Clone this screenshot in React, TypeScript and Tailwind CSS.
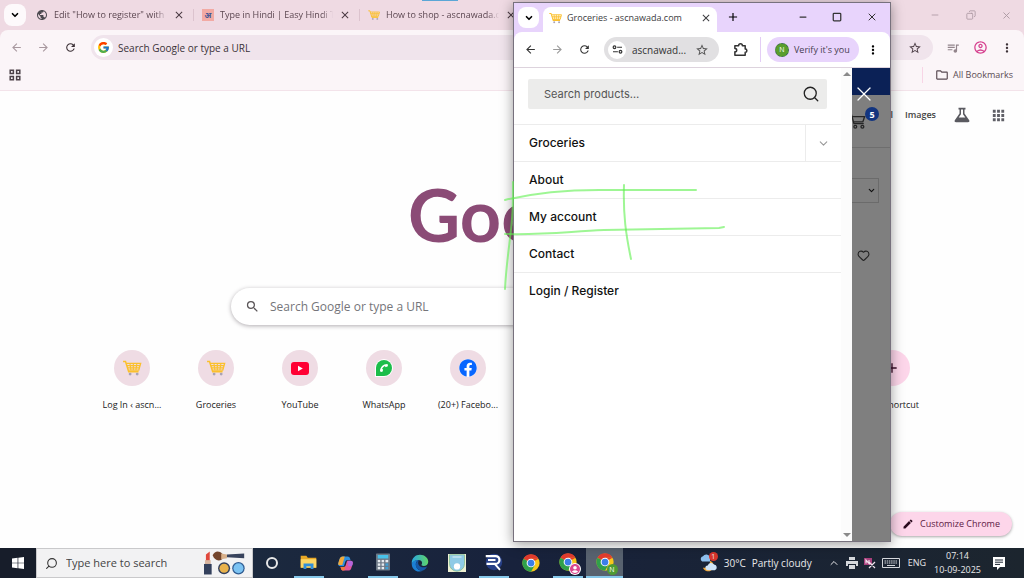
import React, { type ReactElement, type ReactNode } from 'react'
import clsx from 'clsx'
import { FaFacebook, FaPhoneAlt } from 'react-icons/fa'
import { FcGoogle } from 'react-icons/fc'
import {
    MdAccountCircle,
    MdApps,
    MdArrowBack,
    MdArrowForward,
    MdClose,
    MdEdit,
    MdMoreVert,
    MdOutlineAccountCircle,
    MdOutlineFolder,
    MdPublic,
    MdQueueMusic,
    MdRefresh,
    MdSearch,
    MdStarBorder,
    MdAdd,
} from 'react-icons/md'
import { ChevronDown, ChevronUp, Copy, Heart, Minus, Search, Square, X } from 'lucide-react'

interface IconProps {
    className?: string
}

function CartLogo({ className }: IconProps): ReactElement {
    return (
        <svg viewBox="0 0 20 17" className={className} fill="none" stroke="#fbc02d">
            <path d="M0.5 1.5h2.6l3.4 11h10.5" strokeWidth="1.6" />
            <path d="M3.8 3.5h15.4l-2 7.3H6" strokeWidth="1.4" />
            <path d="M4.6 6h14M5.3 8.4h12.6M7.8 3.5l1 7.3M11.4 3.5v7.3M15.2 3.5l-1 7.3" strokeWidth="1.2" />
            <circle cx="8" cy="15" r="1.5" fill="#a9a3b5" stroke="none" />
            <circle cx="15.5" cy="15" r="1.5" fill="#a9a3b5" stroke="none" />
        </svg>
    )
}

function HindiLogo({ className }: IconProps): ReactElement {
    return (
        <span className={clsx('flex items-center justify-center overflow-hidden bg-[#f2aaa4] text-[#3f5594] text-[8px] leading-none font-bold', className)}>
            अ
        </span>
    )
}

function ChromeLogo({ className }: IconProps): ReactElement {
    return (
        <svg viewBox="0 0 24 24" className={className}>
            <circle cx="12" cy="12" r="11.5" fill="#f8c81c" />
            <path d="M12 12 2.04 6.25A11.5 11.5 0 0 1 21.96 6.25H12Z" fill="#e23b2e" />
            <path d="M12 12 2.04 6.25A11.5 11.5 0 0 0 12 23.5l5-8.6Z" fill="#30a04b" />
            <path d="M12 6.25h9.96L12 12Z" fill="#e23b2e" />
            <circle cx="12" cy="12" r="5.8" fill="#fff" />
            <circle cx="12" cy="12" r="4.5" fill="#3b7fe8" />
        </svg>
    )
}

function EdgeLogo({ className }: IconProps): ReactElement {
    return (
        <svg viewBox="0 0 24 24" className={className}>
            <defs>
                <linearGradient id="edgeTop" x1="0" x2="1">
                    <stop offset="0" stopColor="#2aa5e0" />
                    <stop offset="1" stopColor="#5fd668" />
                </linearGradient>
            </defs>
            <path d="M1 13C.5 5.5 6 1 12 1c6.5 0 11 4.500 11 9.300 0 3.700-3 5.700-6 5.700-2 0-3.300-.8-3-1.600 1.800-2.200.6-6.400-4-6.400-4 0-7 2-9 5Z" fill="url(#edgeTop)" />
            <path d="M1 13c2-4 5.500-5.300 9-5-2.600 1.200-4 4-3.500 7 .6 4.300 4.500 8 10 7-8 4-15.500-1-15.500-9Z" fill="#1b7fd4" />
            <path d="M6.500 15C6 11.500 8 8.500 11 8.200c-1.800 1.800-2 4-.6 6.300 2 3.500 7 4 11 2-1.500 3.500-4 5-6.500 5.300-4 .4-8-2.300-8.400-6.800Z" fill="#1558a8" />
        </svg>
    )
}

function CopilotLogo({ className }: IconProps): ReactElement {
    return (
        <svg viewBox="0 0 24 24" className={className}>
            <path d="M8 2h7c2 0 2.800 1 3.400 3l.6 2h-4c-2 0-2.800 1-3.400 3l-1.800 6H5c-3 0-4-2-3-5l2-6c.7-2 2-3 4-3Z" fill="#2d8fe0" />
            <path d="M2 11l1.500-5C4.200 3.500 6 2 8 2h3L7.500 14H3c-1.500 0-1.500-1.500-1-3Z" fill="#f0a93a" />
            <path d="M16 22H9c-2 0-2.800-1-3.400-3L5 17h4c2 0 2.800-1 3.400-3l1.800-6H19c3 0 4 2 3 5l-2 6c-.7 2-2 3-4 3Z" fill="#e0559a" />
            <path d="M5 17h4c2 0 2.800-1 3.400-3l-2 8H9c-2 0-2.800-1-3.400-3Z" fill="#f0783a" />
            <path d="M15 8h4c3 0 4 2 3 5l-1 3h-5Z" fill="#b566dc" />
        </svg>
    )
}

function ExplorerLogo({ className }: IconProps): ReactElement {
    return (
        <svg viewBox="0 0 24 22" className={className}>
            <path d="M1 2h8l2 3h12v14H1Z" fill="#e9a825" />
            <path d="M1 7h22v12H1Z" fill="#fbd666" />
            <path d="M5 13h14v8h-4v-4H9v4H5Z" fill="#2f8fdb" />
        </svg>
    )
}

function CalculatorLogo({ className }: IconProps): ReactElement {
    return (
        <svg viewBox="0 0 20 24" className={className}>
            <rect width="20" height="24" rx="1" fill="#6c7886" />
            <rect x="2.500" y="2" width="15" height="5" fill="#49c2ea" />
            {[9, 14, 19].map((y) => (
                <g key={y} fill="#e6ebf0">
                    <rect x="2.500" y={y} width="3.600" height="3.400" />
                    <rect x="8" y={y} width="3.600" height="3.400" />
                    <rect x="13.500" y={y} width="4" height="3.400" fill={y === 9 ? '#e6ebf0' : '#3f9fd4'} />
                </g>
            ))}
        </svg>
    )
}

function PhotoLogo({ className }: IconProps): ReactElement {
    return (
        <svg viewBox="0 0 24 24" className={className}>
            <rect width="24" height="24" fill="#eef0d2" />
            <path d="M2 1h20v12a10 10 0 0 1-20 0Z" fill="#8fcbe6" stroke="#7fb98b" />
            <circle cx="12" cy="16.500" r="4.200" fill="#fff" />
            <path d="M6 4h12" stroke="#d8eef6" strokeWidth="1.500" />
        </svg>
    )
}

function RecorderLogo({ className }: IconProps): ReactElement {
    return (
        <svg viewBox="0 0 24 24" className={className}>
            <circle cx="12" cy="12" r="11" fill="#263f86" />
            <path d="M1 4h13a5 5 0 0 1 0 10.500H2" fill="none" stroke="#fff" strokeWidth="3" />
            <path d="M4 9.300h10M13 14.500l7 8" fill="none" stroke="#fff" strokeWidth="2.600" />
        </svg>
    )
}

function MakeupArt({ className }: IconProps): ReactElement {
    return (
        <svg viewBox="0 0 46 26" className={className}>
            <path d="M2 4l4-3v10H2Z" fill="#e0483c" />
            <path d="M1 10h6v5H1Z" fill="#d9b6a0" />
            <path d="M0 14h8v11H0Z" fill="#33405c" />
            <path d="M9 5c2-5 7-5 10-2v6c-4 3-8 1-10-4Z" fill="#73452c" />
            <path d="M18 3l6 1v4l-6 1Z" fill="#d8b08a" />
            <path d="M24 4l18-1v5l-18-1Z" fill="#38435c" />
            <circle cx="21" cy="18.500" r="6.300" fill="#33405c" />
            <circle cx="21" cy="18.500" r="4.800" fill="#e8b24c" />
            <circle cx="36" cy="18.500" r="6.500" fill="#2f5c92" />
            <circle cx="36" cy="18.500" r="5.200" fill="#7cc3f2" />
        </svg>
    )
}

function WeatherArt({ className }: IconProps): ReactElement {
    return (
        <svg viewBox="0 0 24 22" className={className}>
            <path d="M14 8a7 7 0 1 1-9 9c5 1 9-3 9-9Z" fill="#f2a93b" />
            <path d="M4 9a3.500 3.500 0 0 1 1-6.500A5 5 0 0 1 14 4v5Z" fill="#8fc0ee" />
            <path d="M11 20a3 3 0 0 1 0-6 4.500 4.500 0 0 1 8-1 3.600 3.600 0 0 1 1 7Z" fill="#cfe4f8" />
        </svg>
    )
}

function Tune({ className }: IconProps): ReactElement {
    return (
        <svg viewBox="0 0 14 12" className={className} fill="none" stroke="#333" strokeWidth="1.600">
            <circle cx="3" cy="3" r="1.800" />
            <path d="M6.500 3H13M1 9h6.500" />
            <circle cx="11" cy="9" r="1.800" />
        </svg>
    )
}

function Flask({ className }: IconProps): ReactElement {
    return (
        <svg viewBox="0 0 16 16" className={className} fill="#5a5a60">
            <path d="M4.500.8h7v1.600h-1v4.200l4.700 6.600c.6 1-.1 2-1.200 2H2c-1.100 0-1.800-1-1.200-2l4.700-6.600V2.400h-1ZM7 2.400v4.800L4.700 10.400h6.600L9 7.200V2.400Z" fillRule="evenodd" />
        </svg>
    )
}

// jigsaw outline with a knob on the top and on the right, notch on the left
function Puzzle({ className }: IconProps): ReactElement {
    return (
        <svg viewBox="0 0 16 16" className={className} fill="none" stroke="#333" strokeWidth="1.600" strokeLinejoin="round">
            <path d="M2 4h4c0-3 4-3 4 0h3v3.500c2.400 0 2.400 3.500 0 3.500v3H2v-3.500c2.600 0 2.600-3.500 0-3.500Z" />
        </svg>
    )
}

function ShopCart({ className }: IconProps): ReactElement {
    return (
        <svg viewBox="0 0 20 18" className={className} fill="none" stroke="#262626" strokeWidth="1.500">
            <path d="M0 1h3l3 11h11" />
            <path d="M4 4h14l-2 6H6" />
            <circle cx="7.500" cy="15.500" r="1.600" />
            <circle cx="15.500" cy="15.500" r="1.600" />
        </svg>
    )
}

interface TabProps {
    icon: ReactNode
    title: string
}

function Tab({ icon, title }: TabProps): ReactElement {
    return (
        <div className="flex w-[166px] shrink-0 items-center border-r border-[#dcc3ce] h-3 pl-2">
            {icon}
            <span className="ml-1.5 w-[113px] overflow-hidden whitespace-nowrap leading-4 mask-r-from-90% text-[#5c4751]">{title}</span>
            <button aria-label="Close tab" className="ml-1.5"><MdClose className="size-3 text-[#4a3a42]" /></button>
        </div>
    )
}

interface ShortcutProps {
    label: string
    children: ReactNode
    pink?: boolean
}

function Shortcut({ label, children, pink }: ShortcutProps): ReactElement {
    return (
        <a href="#" className="flex w-[84px] flex-col items-center gap-[11px] text-[#222]">
            <span className={clsx('flex size-9 items-center justify-center rounded-full', pink ? 'bg-[#fdd6ea]' : 'bg-[#efdce4]')}>
                {children}
            </span>
            <span className="whitespace-nowrap leading-4">{label}</span>
        </a>
    )
}

function BackWindow(): ReactElement {
    return (
        <div className="flex flex-1 flex-col bg-[#efdae3]">
            <div className="flex h-[30px] items-center">
                <button aria-label="Search tabs" className="ml-1 flex size-[22px] items-center justify-center rounded-lg bg-[#fdf9fb]">
                    <ChevronDown className="size-[10px]" strokeWidth={4} />
                </button>
                <div className="ml-0.5 flex flex-1 items-center overflow-hidden">
                    <Tab icon={<MdPublic className="size-3 text-[#4c4a50]" />} title={'Edit "How to register" with E'} />
                    <Tab icon={<HindiLogo className="size-3" />} title="Type in Hindi | Easy Hindi Ty" />
                    <Tab icon={<CartLogo className="h-3 w-3" />} title="How to shop - ascnawada.co" />
                </div>
                <div className="flex w-[94px] items-center justify-between pr-3 text-[#ab98a1]">
                    <button aria-label="Minimize"><Minus className="size-[10px]" /></button>
                    <button aria-label="Restore"><Copy className="size-[10px] -scale-x-100" /></button>
                    <button aria-label="Close"><X className="size-[11px]" /></button>
                </div>
            </div>
            <div className="rounded-t-lg bg-[#fbf5f8] border-b border-[#f3e3ea] h-[61px]">
                <div className="flex h-[35px] items-center">
                    <div className="flex w-[91px] items-center gap-[14px] pl-[10px] text-[#a8989f]">
                        <button aria-label="Back"><MdArrowBack className="size-[13px]" /></button>
                        <button aria-label="Forward"><MdArrowForward className="size-[13px]" /></button>
                        <button aria-label="Reload"><MdRefresh className="size-[13px] text-[#3b3036]" /></button>
                    </div>
                    <div className="flex h-[25px] flex-1 items-center rounded-full bg-[#f0e4ec] px-[3px]">
                        <span className="flex size-[19px] items-center justify-center rounded-full bg-white"><FcGoogle className="size-[13px]" /></span>
                        <input aria-label="Address" placeholder="Search Google or type a URL" className="ml-[5px] flex-1 text-[10px] placeholder:text-[#3b3238] outline-none" />
                        <button aria-label="Bookmark" className="mr-2"><MdStarBorder className="size-[14px] text-[#51434b]" /></button>
                    </div>
                    <div className="flex w-[91px] items-center justify-between pl-[13px] pr-[10px]">
                        <button aria-label="Media"><MdQueueMusic className="size-[14px] text-[#93858c]" /></button>
                        <button aria-label="Profile"><MdOutlineAccountCircle className="size-[15px] text-[#d6408f]" /></button>
                        <button aria-label="Menu"><MdMoreVert className="size-[14px] text-[#3b3036]" /></button>
                    </div>
                </div>
                <div className="flex h-5 items-center justify-between pl-[9px] pr-[11px]">
                    <button aria-label="Apps">
                        <svg viewBox="0 0 12 12" className="size-3" fill="none" stroke="#4c4047" strokeWidth="1.500">
                            <path d="M1.200 1.200h3.200v3.200H1.200zM7.600 1.200h3.200v3.200H7.600zM1.200 7.600h3.200v3.200H1.200zM7.600 7.600h3.200v3.200H7.600z" />
                        </svg>
                    </button>
                    <button className="flex items-center gap-1 border-l border-[#f8d5e6] pl-3 text-[#5a4b53]">
                        <MdOutlineFolder className="size-[14px]" />All Bookmarks
                    </button>
                </div>
            </div>
            <div className="flex flex-1 flex-col bg-[#fefefe]">
                <nav className="flex h-12 items-center justify-end gap-3 pr-[17px] font-semibold text-[#444]">
                    <a href="#">Gmail</a>
                    <a href="#">Images</a>
                    <Flask className="ml-1.5 size-4" />
                    <MdApps className="ml-2 size-[17px] text-[#5f5f66]" />
                </nav>
                <h1 className="mx-auto mt-8 h-[86px] w-[208px] whitespace-nowrap font-['Lato'] text-[72px] leading-[86px] font-bold text-[#8b4b76]">Google</h1>
                <label className="mx-auto mt-[31px] flex h-[37px] w-[562px] items-center rounded-full bg-white pl-[14px] shadow-[0_1px_4px_rgba(60,50,60,0.4)]">
                    <MdSearch className="size-[15px] text-[#5a5558]" />
                    <input placeholder="Search Google or type a URL" className="ml-[10px] flex-1 text-[12px] placeholder:text-[#75757a] outline-none" />
                </label>
                <div className="mx-auto mt-[25px] flex w-[844px] justify-between">
                    <Shortcut label="Log In ‹ ascn..."><CartLogo className="h-4 w-5" /></Shortcut>
                    <Shortcut label="Groceries"><CartLogo className="h-4 w-5" /></Shortcut>
                    <Shortcut label="YouTube">
                        <svg viewBox="0 0 18 13" className="h-[13px] w-[18px]">
                            <rect width="18" height="13" rx="3" fill="#ff0033" />
                            <path d="M7 3.800v5.400l4.800-2.700Z" fill="#fff" />
                        </svg>
                    </Shortcut>
                    <Shortcut label="WhatsApp">
                        <span className="flex size-4 items-center justify-center rounded-full rounded-bl-sm bg-[#1cbd4a] ring-1 ring-white">
                            <FaPhoneAlt className="size-2 rotate-90 text-white" />
                        </span>
                    </Shortcut>
                    <Shortcut label="(20+) Facebo...">
                        <span className="rounded-full bg-white"><FaFacebook className="size-[18px] text-[#0866ff]" /></span>
                    </Shortcut>
                    <div className="flex-1" />
                    <Shortcut label="Add shortcut" pink><MdAdd className="size-4 text-[#3a0f2a]" /></Shortcut>
                </div>
                <div className="mt-auto flex justify-end pb-3 pr-3">
                    <button className="flex h-6 items-center gap-1.5 rounded-full bg-[#fdd6ea] px-3 text-[#5c1a44] shadow-[0_1px_3px_rgba(0,0,0,0.35)]">
                        <MdEdit className="size-3 text-[#2a0a1e]" />Customize Chrome
                    </button>
                </div>
            </div>
        </div>
    )
}

const menu = ['Groceries', 'About', 'My account', 'Contact', 'Login / Register']

function FrontWindow(): ReactElement {
    return (
        <div className="absolute left-[513px] top-[2px] bottom-9 flex w-[378px] flex-col border border-[#77717d] bg-[#e8d4fc] shadow-[0_2px_12px_rgba(0,0,0,0.4)]">
            <div className="flex h-[29px] items-end">
                <button aria-label="Search tabs" className="mb-1 ml-1 flex size-[21px] items-center justify-center rounded-lg bg-white">
                    <ChevronDown className="size-[10px]" strokeWidth={4} />
                </button>
                <div className="ml-1 flex h-[25px] w-[174px] items-center rounded-t-lg bg-white pb-1 pl-1.5 text-[#3c3c40]">
                    <CartLogo className="h-3 w-[13px]" />
                    <span className="ml-[5px] flex-1 whitespace-nowrap">Groceries - ascnawada.com</span>
                    <button aria-label="Close tab" className="mr-[5px]"><MdClose className="size-3" /></button>
                </div>
                <button aria-label="New tab" className="mb-2 ml-[9px]"><MdAdd className="size-[14px]" /></button>
                <div className="mb-[9px] ml-auto flex w-[92px] items-center justify-between pr-3 text-[#333]">
                    <button aria-label="Minimize"><Minus className="size-[10px]" strokeWidth={3} /></button>
                    <button aria-label="Maximize"><Square className="size-[10px]" strokeWidth={3} /></button>
                    <button aria-label="Close"><X className="size-3" /></button>
                </div>
            </div>
            <div className="flex h-9 items-center rounded-t-lg border-b border-[#ddd3dd] bg-white">
                <div className="flex w-[90px] items-center gap-[14px] pl-[10px] text-[#333]">
                    <button aria-label="Back"><MdArrowBack className="size-[13px]" /></button>
                    <button aria-label="Forward"><MdArrowForward className="size-[13px] text-[#9a9a9a]" /></button>
                    <button aria-label="Reload"><MdRefresh className="size-[13px]" /></button>
                </div>
                <div className="flex h-[25px] w-[115px] items-center rounded-full bg-[#e1e0e2] px-1">
                    <span className="flex size-[18px] shrink-0 items-center justify-center rounded-full bg-white"><Tune className="h-[9px] w-[11px]" /></span>
                    <input aria-label="Address" defaultValue="ascnawad..." className="ml-1.5 w-[60px] text-[10px] text-[#333] outline-none" />
                    <button aria-label="Bookmark" className="ml-[3px]"><MdStarBorder className="size-[14px] text-[#555]" /></button>
                </div>
                <button aria-label="Extensions" className="ml-[14px]"><Puzzle className="size-[15px]" /></button>
                <button className="ml-3 border-l border-[#e3cdf5] pl-1.5">
                    <span className="flex h-[25px] items-center gap-[5px] rounded-full bg-[#e8d4fc] pl-2 pr-[9px] text-[#463c50]">
                        <span className="flex size-[14px] items-center justify-center rounded-full border border-dashed border-[#3f6a55] bg-[#5a9e2d] text-[7px] leading-none text-white">N</span>
                        <span className="whitespace-nowrap">Verify it's you</span>
                    </span>
                </button>
                <button aria-label="Menu" className="ml-auto mr-[10px]"><MdMoreVert className="size-[14px]" /></button>
            </div>
            <div className="flex flex-1 bg-white">
                <aside className="flex-1 pt-[11px] font-['Inter'] text-[12px] text-[#111]">
                    <label className="mx-[14px] flex h-[30px] items-center rounded-xs bg-[#ececeb] pl-4 pr-[7px]">
                        <input placeholder="Search products…" className="min-w-0 flex-1 text-[11px] placeholder:text-[#555] outline-none" />
                        <Search className="size-[18px] text-[#222]" strokeWidth={1.75} />
                    </label>
                    <ul className="mt-[15px]">
                        {menu.map((item, index) => (
                            <li key={item} className="flex h-[37px] items-center border-t border-[#ececec]">
                                <a href="#" className="flex-1 pl-[15px] font-medium">{item}</a>
                                {index === 0 && (
                                    <button aria-label="Expand" className="flex h-full w-9 items-center justify-center border-l border-[#ececec]">
                                        <ChevronDown className="size-[13px] text-[#999]" />
                                    </button>
                                )}
                            </li>
                        ))}
                    </ul>
                </aside>
                <div className="flex w-[11px] flex-col items-center justify-between bg-[#fcfcfc] py-1 text-[#8a8a8a]">
                    <svg viewBox="0 0 8 4" className="h-1 w-2" fill="currentColor"><path d="M0 4 4 0l4 4Z" /></svg>
                    <svg viewBox="0 0 8 4" className="h-1 w-2" fill="currentColor"><path d="M0 0l4 4 4-4Z" /></svg>
                </div>
                <div className="relative w-[38px] bg-[#7f7f7f]">
                    <div className="h-[27px] bg-[#0b2156]" />
                    <button aria-label="Close menu" className="absolute left-0 top-[14px]"><X className="size-6 text-white" strokeWidth={1.25} /></button>
                    <div className="flex h-[53px] items-center overflow-hidden border-b border-[#6e6e6e]">
                        <ShopCart className="-ml-1 h-4 w-[19px]" />
                    </div>
                    <span className="absolute left-[13px] top-[39px] flex size-[14px] items-center justify-center rounded-full bg-[#13357f] text-[9px] leading-none font-bold text-white">5</span>
                    <div className="relative mt-[30px] h-[25px] w-[27px]">
                        <select aria-label="Sort order" className="h-full w-full appearance-none border border-l-0 border-[#6b6b6b]" />
                        <ChevronDown className="pointer-events-none absolute right-[3px] top-2 size-[9px] text-[#111]" strokeWidth={3} />
                    </div>
                    <button aria-label="Add to wishlist" className="ml-[5px] mt-[46px]"><Heart className="size-[13px] text-[#222]" /></button>
                </div>
            </div>
        </div>
    )
}

interface TaskItem {
    name: string
    icon: ReactNode
    open?: boolean
    active?: boolean
}

const tasks: TaskItem[] = [
    { name: 'Cortana', icon: <span className="size-3 rounded-full border-2 border-[#e8e8e8]" /> },
    { name: 'File Explorer', icon: <ExplorerLogo className="h-4 w-[17px]" />, open: true },
    { name: 'Copilot', icon: <CopilotLogo className="size-[17px]" /> },
    { name: 'Calculator', icon: <CalculatorLogo className="h-[18px] w-[14px]" />, open: true },
    { name: 'Edge', icon: <EdgeLogo className="size-[18px]" /> },
    { name: 'Photos', icon: <PhotoLogo className="size-[18px]" /> },
    { name: 'Recorder', icon: <RecorderLogo className="size-[18px]" />, open: true },
    { name: 'Chrome', icon: <ChromeLogo className="size-[18px]" /> },
    {
        name: 'Chrome profile',
        icon: (
            <span className="relative">
                <ChromeLogo className="size-[18px]" />
                <MdAccountCircle className="absolute -bottom-1 -right-1 size-3 rounded-full bg-white text-[#d9488f]" />
            </span>
        ),
        open: true,
    },
    {
        name: 'Chrome groceries',
        icon: (
            <span className="relative">
                <ChromeLogo className="size-[18px]" />
                <span className="absolute -bottom-1 -right-1 flex size-[11px] items-center justify-center rounded-full bg-[#4f9a34] text-[7px] leading-none text-white">N</span>
            </span>
        ),
        active: true,
    },
]

function Taskbar(): ReactElement {
    return (
        <footer className="flex h-[30px] items-center bg-linear-to-r from-[#1f3040] via-[#18223c] to-[#1c252e] text-[#e8e8ea]">
            <button aria-label="Start" className="flex h-full w-9 items-center justify-center bg-[#171d2a]">
                <svg viewBox="0 0 12 12" className="size-3" fill="#fff">
                    <path d="M0 1.600 5.600.8v4.900H0ZM6.300.7 12 0v5.700H6.300ZM0 6.300h5.600v4.900L0 10.400ZM6.300 6.300H12V12l-5.700-.8Z" />
                </svg>
            </button>
            <label className="flex h-full w-[217px] items-center border border-[#c9c9cb] bg-[#f2f2f3] pl-2 pr-1">
                <Search className="size-[13px] -scale-x-100 text-[#333]" />
                <input placeholder="Type here to search" className="ml-2 w-[128px] text-[11px] placeholder:text-[#444] outline-none" />
                <MakeupArt className="ml-auto h-[26px] w-[44px]" />
            </label>
            {tasks.map((task) => (
                <button
                    key={task.name}
                    aria-label={task.name}
                    className={clsx('flex h-full w-[37px] items-center justify-center', task.active && 'border-b-2 border-[#86c8ea] bg-[#58626f]')}
                >
                    <span className={clsx('flex h-full w-[30px] items-center justify-center', task.open && 'border-b-2 border-[#86c8ea]')}>
                        {task.icon}
                    </span>
                </button>
            ))}
            <div className="ml-auto flex h-full items-center">
                <div className="relative">
                    <WeatherArt className="h-[18px] w-[19px]" />
                    <span className="absolute -top-0.5 right-0 flex size-[9px] items-center justify-center rounded-full bg-[#d8352c] text-[7px] leading-none">1</span>
                </div>
                <span className="ml-1.5 text-[10px]">30°C</span>
                <span className="ml-1.5 whitespace-nowrap text-[10px]">Partly cloudy</span>
                <ChevronUp className="ml-4 size-3" />
                <svg viewBox="0 0 12 12" className="ml-1.5 size-3" fill="#d5d8dc">
                    <path d="M3 0h6v3H3zM0 4h12v5h-2V7H2v2H0zM3 8h6v4H3z" />
                </svg>
                <svg viewBox="0 0 12 12" className="ml-1.5 size-3">
                    <path d="M0 1h8v7H0z" fill="#a8407c" />
                    <path d="M2 6.500V3l3 3.500V3M5 5l6 6M11 5l-6 6" fill="none" stroke="#f1e3ec" strokeWidth="1.200" />
                </svg>
                <svg viewBox="0 0 18 12" className="ml-1.5 h-3 w-[18px]" fill="none" stroke="#d5d8dc">
                    <path d="M.5 1.500h17v9H.5z" />
                    <path d="M2.500 4h13M2.500 6h13" strokeDasharray="1.500 0.700" />
                    <path d="M5 8.500h8" />
                </svg>
                <span className="ml-2">ENG</span>
                <div className="ml-2 flex flex-col items-center leading-[14px]">
                    <span>07:14</span>
                    <span>10-09-2025</span>
                </div>
                <svg viewBox="0 0 12 13" className="ml-3 mr-[19px] h-[13px] w-3">
                    <path d="M0 0h12v10H7l-3 3v-3H0Z" fill="#fff" />
                    <path d="M2 3h8M2 5.200h8M2 7.400h5" stroke="#1a2430" />
                </svg>
            </div>
        </footer>
    )
}

function PenMarks(): ReactElement {
    return (
        <svg viewBox="0 0 222 112" className="pointer-events-none absolute left-[504px] top-[180px] h-[112px] w-[222px]" fill="none" stroke="#5df04c" strokeOpacity="0.6" strokeWidth="2" strokeLinecap="round">
            <path d="M1 20C30 13 60 10 95 10L192 10" />
            <path d="M1 54C40 55 60 52 100 50L215 48 220 47" />
            <path d="M9 2V18C9 50 3 70 1 109" />
            <path d="M120 5C119 35 122 55 127 79" />
        </svg>
    )
}

export default function App(): ReactElement {
    return (
        <div className="relative flex min-h-screen flex-col overflow-hidden font-['Open_Sans','Noto_Sans',sans-serif] text-[9px] leading-4">
            <BackWindow />
            <Taskbar />
            <div className="absolute left-[422px] top-0 h-px w-9 bg-[#5aa6d6]" />
            <FrontWindow />
            <PenMarks />
        </div>
    )
}
